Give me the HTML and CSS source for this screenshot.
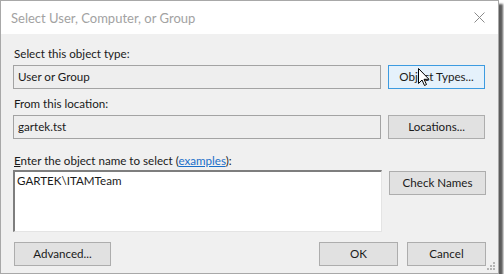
FILE: index.html
```html
<!DOCTYPE html>
<html lang="en">
<head>
  <meta charset="UTF-8">
  <title>Select User, Computer, or Group</title>
  <link rel="stylesheet" href="styles.css">
</head>
<body>
  <!-- dialog window -->
  <div class="window">
    <div class="titlebar">
      <span class="title">Select User, Computer, or Group</span>
      <svg class="close" width="11" height="11" viewBox="0 0 11 11">
        <path d="M0.5 0.5 L10.5 10.5 M10.5 0.5 L0.5 10.5" stroke="#8a8a8a" stroke-width="1" fill="none"/>
      </svg>
    </div>

    <div class="content">
      <div class="label first">Select this object type:</div>
      <div class="row">
        <div class="field">User or Group</div>
        <div class="btn hot">Object Types...
          <svg class="cursor" width="12" height="19" viewBox="0 0 12 19">
            <path d="M0.5 0.5 L0.5 15.5 L4 12 L6.5 17.5 L8.5 16.5 L6 11.3 L11 11.3 Z" fill="#fff" stroke="#000" stroke-width="1"/>
          </svg>
        </div>
      </div>

      <div class="label">From this location:</div>
      <div class="row">
        <div class="field">gartek.tst</div>
        <div class="btn">Locations...</div>
      </div>

      <div class="label third"><u>E</u>nter the object name to select (<a class="link">examples</a>):</div>
      <div class="row top">
        <div class="memo">GARTEK\ITAMTeam</div>
        <div class="btn names">Check Names</div>
      </div>

      <div class="actions">
        <div class="btn wide">Advanced...</div>
        <div class="spacer"></div>
        <div class="btn small">OK</div>
        <div class="btn small">Cancel</div>
      </div>

      <svg class="grip" width="8" height="8" viewBox="0 0 8 8">
        <rect x="6" y="0" width="2" height="2" fill="#b5b5b5"/>
        <rect x="3" y="3" width="2" height="2" fill="#b5b5b5"/>
        <rect x="6" y="3" width="2" height="2" fill="#b5b5b5"/>
        <rect x="0" y="6" width="2" height="2" fill="#b5b5b5"/>
        <rect x="3" y="6" width="2" height="2" fill="#b5b5b5"/>
        <rect x="6" y="6" width="2" height="2" fill="#b5b5b5"/>
      </svg>
    </div>
  </div>
</body>
</html>
```

FILE: styles.css
```css
/* page */
body {
  margin: 0;
  background: #fff;
  font-family: Lato, "Noto Sans", sans-serif;
  font-size: 11.6px;
  color: #1a1a1a;
}

/* window frame with shadow */
.window {
  width: 497px;
  height: 272px;
  border: 1px solid #a8a8a8;
  background: #f0f0f0;
  box-shadow: 4px 4px 2px #5c5c5c;
  display: flex;
  flex-direction: column;
}

.titlebar {
  height: 33px;
  background: #fff;
  display: flex;
  align-items: center;
  padding: 0 13px 0 10px;
}

.title {
  flex: 1;
  font-size: 13px;
  color: #a2a2a2;
}

.content {
  flex: 1;
  position: relative;
  padding: 0 12px 0 12px;
}

/* labels */
.label {
  height: 16px;
  line-height: 16px;
  margin: 7px 0 3px 1px;
}

.label.first {
  margin-top: 12px;
}

.label.third {
  margin-top: 14px;
  margin-bottom: 1px;
}

.link {
  color: #1a6fc9;
  text-decoration: underline;
}

/* rows: field + button */
.row {
  display: flex;
  align-items: center;
  gap: 7px;
}

.row.top {
  align-items: flex-start;
}

.field {
  width: 362px;
  height: 22px;
  line-height: 22px;
  border: 1px solid #a3a3a3;
  background: #eeeeee;
  padding-left: 4px;
}

.memo {
  width: 364px;
  height: 57px;
  background: #fff;
  border-top: 2px solid #7e7e7e;
  border-left: 2px solid #7e7e7e;
  border-right: 1px solid #e4e4e4;
  border-bottom: 1px solid #e4e4e4;
  padding: 2px 0 0 2px;
}

/* buttons */
.btn {
  position: relative;
  width: 95px;
  height: 22px;
  line-height: 22px;
  text-align: center;
  background: #e1e1e1;
  border: 1px solid #adadad;
  color: #1a1a1a;
}

.btn.hot {
  background: #e5f1fb;
  border-color: #3d9be0;
}

.btn.names {
  margin-top: 1px;
}

.cursor {
  position: absolute;
  left: 29px;
  top: 2px;
}

.actions {
  display: flex;
  gap: 9px;
  margin-top: 10px;
  padding-left: 1px;
}

.btn.wide {
  width: 95px;
}

.btn.small {
  width: 77px;
}

.spacer {
  flex: 1;
}

.grip {
  position: absolute;
  right: 3px;
  bottom: 3px;
}
```
